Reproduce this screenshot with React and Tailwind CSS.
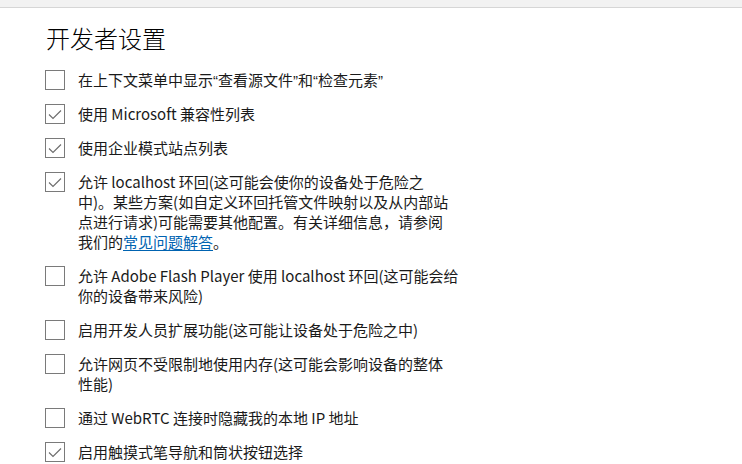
import React from 'react';

const Q = ({ children }) => (
    <span className="leading-none" style={{ fontFamily: '"Liberation Sans", sans-serif' }}>{children}</span>
);

const settings = [
    {
        checked: false,
        lines: [
            <>在上下文菜单中显示<Q>“</Q>查看源文件<Q>”</Q>和<Q>“</Q>检查元素<Q>”</Q></>,
        ],
    },
    { checked: true, lines: ['使用 Microsoft 兼容性列表'] },
    { checked: true, lines: ['使用企业模式站点列表'] },
    {
        checked: true,
        lines: [
            '允许 localhost 环回(这可能会使你的设备处于危险之',
            '中)。某些方案(如自定义环回托管文件映射以及从内部站',
            '点进行请求)可能需要其他配置。有关详细信息，请参阅',
        ],
        link: true,
    },
    { checked: false, lines: ['允许 Adobe Flash Player 使用 localhost 环回(这可能会给', '你的设备带来风险)'] },
    { checked: false, lines: ['启用开发人员扩展功能(这可能让设备处于危险之中)'] },
    { checked: false, lines: ['允许网页不受限制地使用内存(这可能会影响设备的整体', '性能)'] },
    { checked: false, lines: ['通过 WebRTC 连接时隐藏我的本地 IP 地址'] },
    { checked: true, lines: ['启用触摸式笔导航和筒状按钮选择'] },
];

const Checkbox = ({ checked }) => (
    <div className="w-5 h-5 shrink-0 border border-[#7a7a7a] bg-white flex items-center justify-center">
        {checked && (
            <svg width="18" height="18" viewBox="0 0 18 18" fill="none">
                <path d="M3 9.5 L7 13.5 L15 5.5" stroke="#6b6b6b" strokeWidth="1.1" />
            </svg>
        )}
    </div>
);

const App = () => {
    return (
        <div
            className="w-[742px] h-[464px] overflow-hidden bg-white text-[#1a1a1a]"
            style={{ fontFamily: '"Noto Sans CJK SC", sans-serif' }}
        >
            {/* top strip */}
            <div className="h-2 bg-[#f2f2f2] border-b border-[#d6d6d6]" />

            <div className="pl-[45px] pt-[14px]">
                <h1 className="text-[24px] leading-[32px] font-light text-black pl-px">开发者设置</h1>

                <div className="mt-[16px] flex flex-col gap-[14px]">
                    {settings.map((s, i) => (
                        <div key={i} className="flex items-start gap-[13px]">
                            <Checkbox checked={s.checked} />
                            <div className="text-[15px] leading-[20px] whitespace-nowrap">
                                {s.lines.map((l, j) => (
                                    <div key={j} className="h-5">{l}</div>
                                ))}
                                {s.link && (
                                    <div className="h-5">
                                        我们的<span className="text-[#0063b1] underline underline-offset-2">常见问题解答</span>。
                                    </div>
                                )}
                            </div>
                        </div>
                    ))}
                </div>
            </div>
        </div>
    );
};

export default App;
